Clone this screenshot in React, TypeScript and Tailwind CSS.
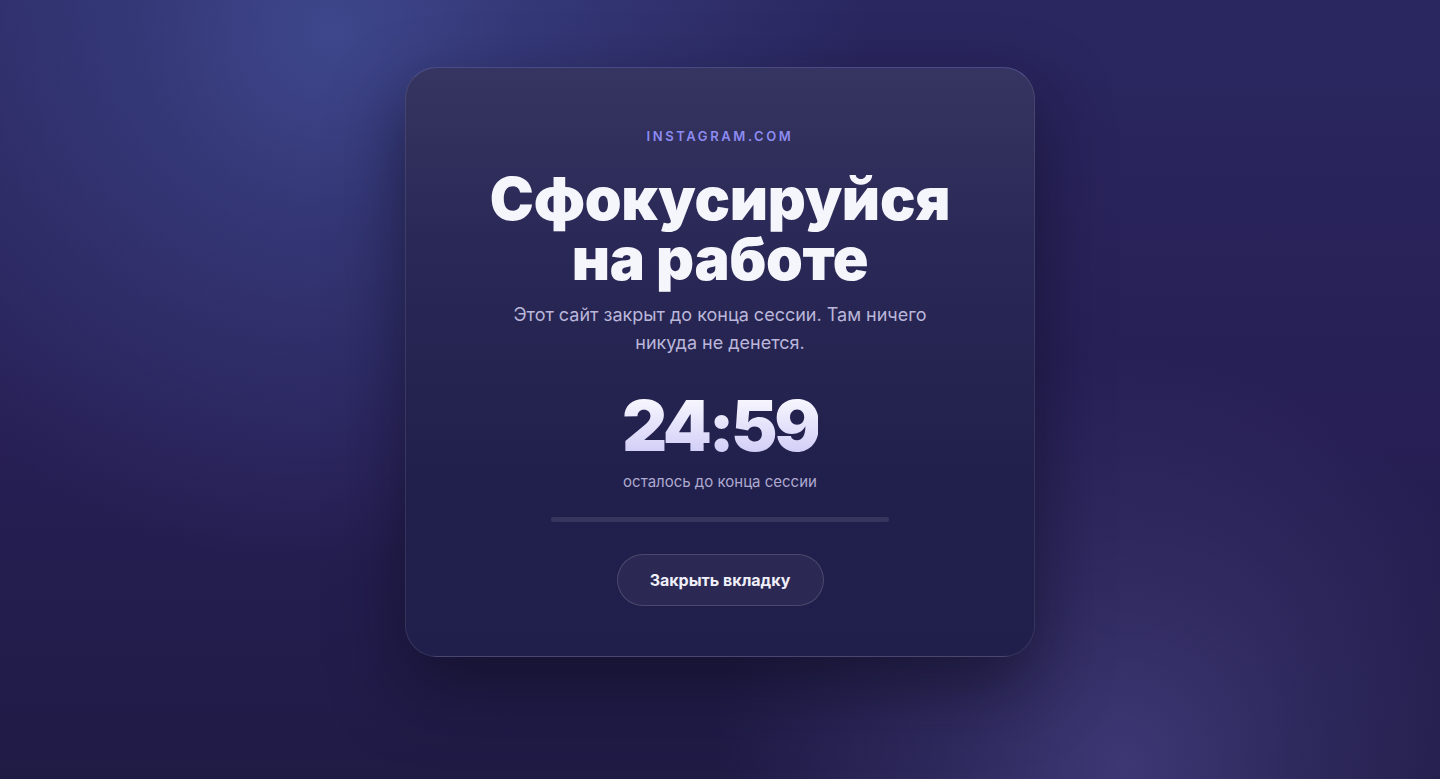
export default function App() {
  return (
    <main className="flex min-h-screen w-full items-start justify-center bg-[#241f50] bg-[radial-gradient(circle_at_23%_4%,#3e478c_0%,rgba(62,71,140,0.55)_14%,transparent_40%),radial-gradient(circle_at_78%_98%,#3d3874_0%,rgba(61,56,116,0.5)_13%,transparent_30%),linear-gradient(180deg,#2a2760_0%,#271f55_55%,#1f1b45_100%)] pt-[67px] font-['Inter',sans-serif]">
      <section className="flex w-[630px] flex-col items-center rounded-[32px] border border-white/10 border-t-[#5d5ea0]/70 bg-[linear-gradient(180deg,#363460_0%,#2a2856_30%,#211f4b_70%,#201e4a_100%)] px-10 pb-[50px] pt-[58px] shadow-[0_30px_70px_rgba(14,11,32,0.6)]">
        <div className="text-[13px] font-semibold leading-5 tracking-[0.2em] text-[#8d8cf2]">
          INSTAGRAM.COM
        </div>

        <h1 className="mt-[23px] text-center text-[59px] font-black leading-[60px] tracking-[-0.005em] text-[#f5f5fc]">
          Сфокусируйся
          <br />
          на работе
        </h1>

        <p className="mt-[12px] max-w-[440px] text-center text-[18px] leading-[28px] text-[#bab7da]">
          Этот сайт закрыт до конца сессии. Там ничего никуда не денется.
        </p>

        <div className="mt-[30px] bg-[linear-gradient(180deg,#ffffff_0%,#c9c5f6_100%)] bg-clip-text text-[70px] font-black leading-[78px] tracking-[-0.05em] text-transparent">
          24:59
        </div>

        <div className="mt-[7px] text-[15px] leading-5 text-[#aeaad0]">
          осталось до конца сессии
        </div>

        <div className="mt-[25px] h-[5px] w-[338px] rounded-full bg-white/10" />

        <button
          type="button"
          className="mt-[32px] h-[52px] w-[207px] rounded-full border border-white/15 bg-white/5 text-[16px] font-bold text-[#f0eff9]"
        >
          Закрыть вкладку
        </button>
      </section>
    </main>
  );
}
